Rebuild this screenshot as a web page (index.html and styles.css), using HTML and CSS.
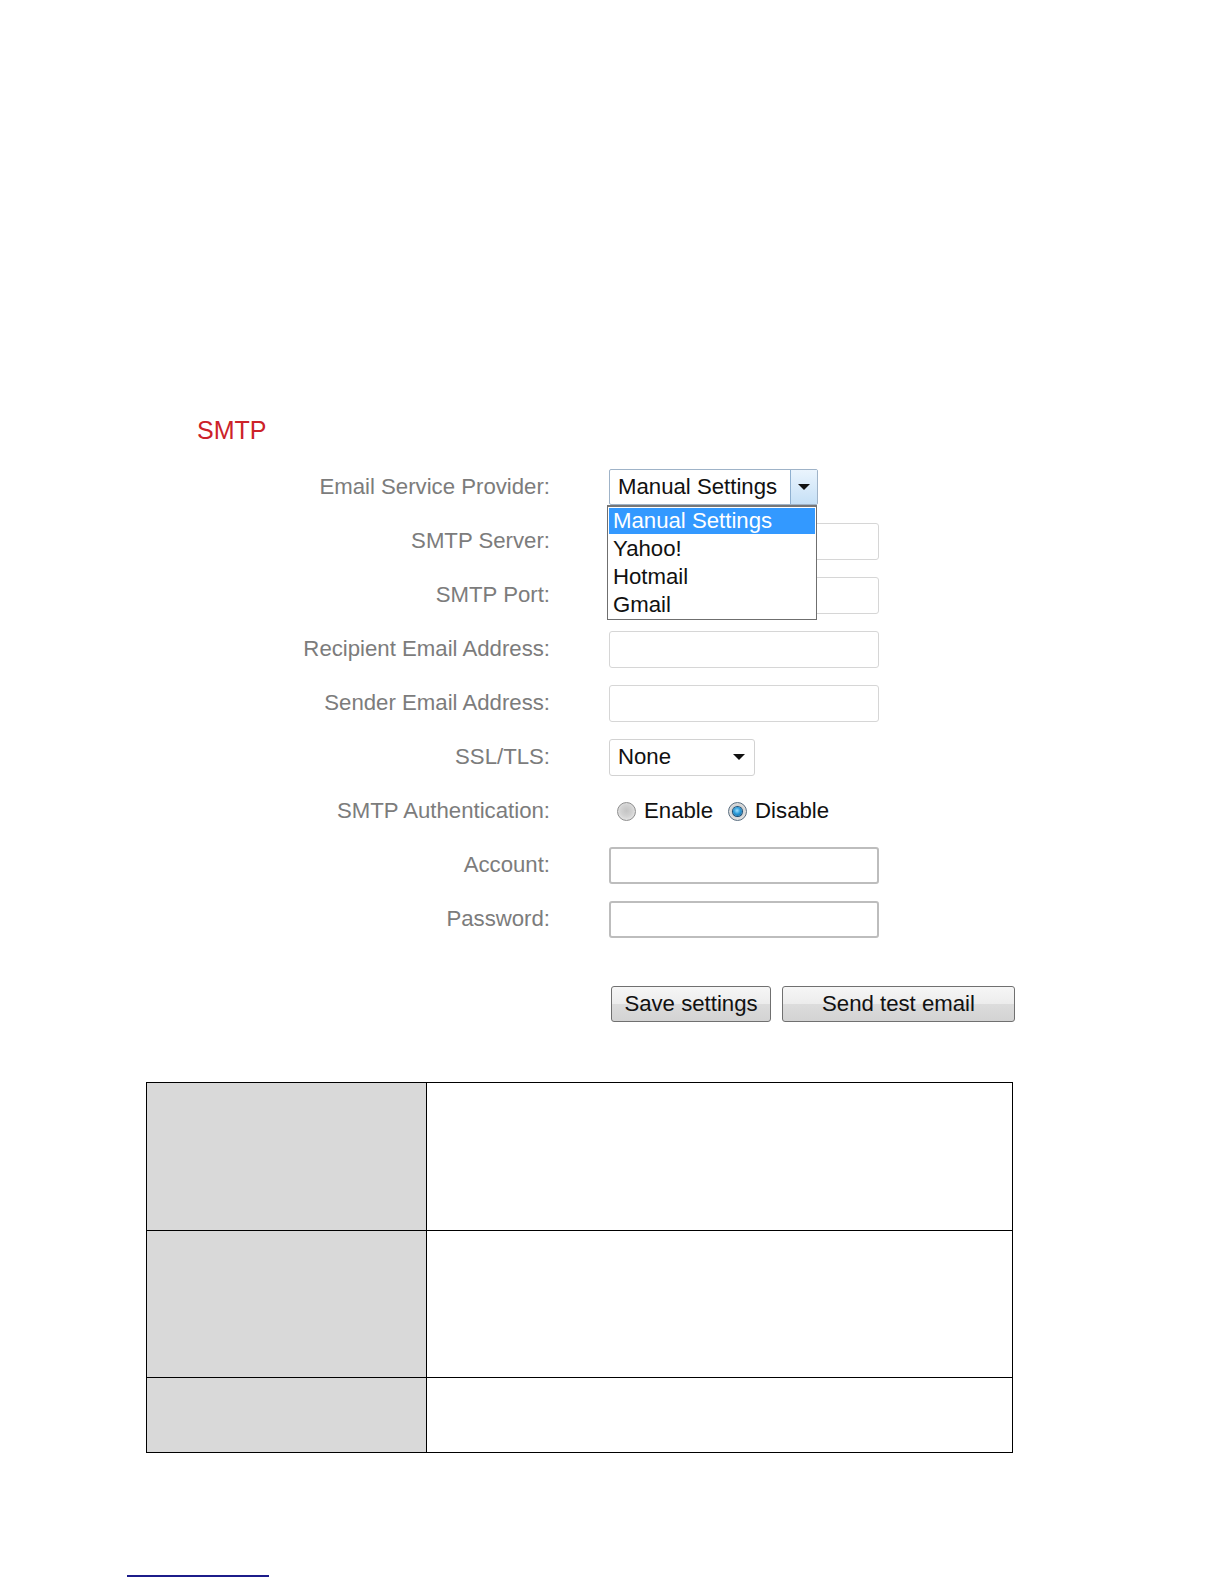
FILE: index.html
```html
<!DOCTYPE html>
<html>
<head>
<meta charset="utf-8">
<title>SMTP</title>
<link rel="stylesheet" href="styles.css">
</head>
<body>
<div class="page">
  <div class="title">SMTP</div>
  <div class="form">
    <div class="label">Email Service Provider:</div>
    <div class="field">
      <div class="combo">
        <div class="combo-box">
          <span class="combo-text">Manual Settings</span>
          <span class="combo-btn"><span class="tri"></span></span>
        </div>
        <div class="listbox">
          <div class="opt sel">Manual Settings</div>
          <div class="opt">Yahoo!</div>
          <div class="opt">Hotmail</div>
          <div class="opt">Gmail</div>
        </div>
      </div>
    </div>

    <div class="label">SMTP Server:</div>
    <div class="field"><div class="input"></div></div>

    <div class="label">SMTP Port:</div>
    <div class="field"><div class="input"></div></div>

    <div class="label">Recipient Email Address:</div>
    <div class="field"><div class="input"></div></div>

    <div class="label">Sender Email Address:</div>
    <div class="field"><div class="input"></div></div>

    <div class="label">SSL/TLS:</div>
    <div class="field">
      <div class="select-small"><span>None</span><span class="tri"></span></div>
    </div>

    <div class="label">SMTP Authentication:</div>
    <div class="field radios">
      <span class="radio"></span><span class="rtext">Enable</span>
      <span class="radio on"><span class="dot"></span></span><span class="rtext">Disable</span>
    </div>

    <div class="label">Account:</div>
    <div class="field"><div class="input dark"></div></div>

    <div class="label">Password:</div>
    <div class="field"><div class="input dark"></div></div>
  </div>

  <div class="buttons">
    <div class="btn save">Save settings</div>
    <div class="btn send">Send test email</div>
  </div>

  <table class="desc">
    <tr class="r1"><td class="c1"></td><td class="c2"></td></tr>
    <tr class="r2"><td class="c1"></td><td class="c2"></td></tr>
    <tr class="r3"><td class="c1"></td><td class="c2"></td></tr>
  </table>

  <div class="footline"></div>
</div>
</body>
</html>
```
FILE: styles.css
```css
html, body {
  margin: 0;
  padding: 0;
  background: #ffffff;
}
body {
  font-family: "Liberation Sans", Arial, sans-serif;
}
.page {
  padding-top: 415px;
}
.title {
  margin-left: 197px;
  font-size: 25px;
  line-height: 30px;
  color: #cc2229;
}
.form {
  margin-top: 15px;
  display: grid;
  grid-template-columns: 550px 1fr;
  column-gap: 59px;
  grid-auto-rows: 54px;
  align-items: center;
}
.label {
  text-align: right;
  font-size: 22.2px;
  color: #7c7c7c;
  line-height: 26px;
}
.field {
  display: flex;
  align-items: center;
}
.input {
  width: 270px;
  height: 37px;
  box-sizing: border-box;
  border: 1px solid #d6d6d6;
  border-radius: 3px;
  background: #fff;
}
.input.dark {
  border: 2px solid #bdbdbd;
}
.combo {
  position: relative;
  width: 209px;
  height: 36px;
}
.combo-box {
  box-sizing: border-box;
  width: 209px;
  height: 36px;
  border: 1px solid #9fb3c8;
  border-radius: 2px;
  display: flex;
  align-items: center;
  background: #fff;
}
.combo-text {
  flex: 1;
  padding-left: 8px;
  font-size: 22.2px;
  color: #111;
}
.combo-btn {
  width: 27px;
  height: 100%;
  box-sizing: border-box;
  border-left: 1px solid #8fb0d0;
  background: linear-gradient(#eaf4fd, #c6e0f6);
  display: flex;
  align-items: center;
  justify-content: center;
}
.tri {
  width: 0;
  height: 0;
  border-left: 6px solid transparent;
  border-right: 6px solid transparent;
  border-top: 6px solid #111;
}
.listbox {
  position: absolute;
  left: -2px;
  top: 36px;
  width: 210px;
  box-sizing: border-box;
  border: 1px solid #6f6f6f;
  border-top: 2px solid #777;
  background: #fff;
  padding: 1px 0 0 0;
  z-index: 2;
}
.opt {
  height: 28px;
  line-height: 27px;
  padding-left: 4px;
  font-size: 22.2px;
  color: #111;
  margin: 0 1px;
}
.opt.sel {
  background: #3399ff;
  color: #fff;
  height: 26px;
  line-height: 26px;
  margin-bottom: 1px;
}
.select-small {
  width: 146px;
  height: 37px;
  box-sizing: border-box;
  border: 1px solid #d2d2d2;
  border-radius: 3px;
  display: flex;
  align-items: center;
  justify-content: space-between;
  padding: 0 8px 0 8px;
  font-size: 22.2px;
  color: #111;
}
.select-small .tri {
  margin-right: 1px;
}
.radios {
  padding-left: 8px;
  font-size: 22.2px;
  color: #111;
}
.radio {
  width: 19px;
  height: 19px;
  box-sizing: border-box;
  border-radius: 50%;
  border: 1px solid #8e8e8e;
  background: radial-gradient(circle at 50% 45%, #c4c4c4 0, #d2d2d2 45%, #f2f2f2 100%);
  margin-right: 8px;
  display: flex;
  align-items: center;
  justify-content: center;
}
.radio.on {
  margin-left: 15px;
  margin-right: 8px;
  border-color: #5a6e80;
}
.radio .dot {
  width: 9px;
  height: 9px;
  border-radius: 50%;
  background: radial-gradient(circle at 45% 40%, #9ee0ff 0, #2a9ad8 45%, #0b5a92 100%);
  box-shadow: 0 0 0 1px #1a4f78;
}
.rtext {
  line-height: 26px;
}
.buttons {
  margin-top: 40px;
  margin-left: 611px;
  display: flex;
  gap: 11px;
}
.btn {
  height: 36px;
  box-sizing: border-box;
  border: 1px solid #707070;
  border-radius: 3px;
  background: linear-gradient(#f6f6f6 0%, #ececec 50%, #dcdcdc 51%, #d3d3d3 100%);
  font-size: 22.2px;
  color: #111;
  display: flex;
  align-items: center;
  justify-content: center;
}
.btn.save { width: 160px; }
.btn.send { width: 233px; }
.desc {
  margin-top: 60px;
  margin-left: 146px;
  width: 867px;
  border-collapse: collapse;
}
.desc td {
  border: 1px solid #000;
  padding: 0;
}
.desc .c1 {
  width: 279px;
  background: #d9d9d9;
}
.desc .r1 td, .desc .r2 td { height: 146.6px; }
.desc .r3 td { height: 73.8px; }
.footline {
  margin-top: 122px;
  margin-left: 127px;
  width: 142px;
  border-top: 2px solid #1c1c8a;
}
```
